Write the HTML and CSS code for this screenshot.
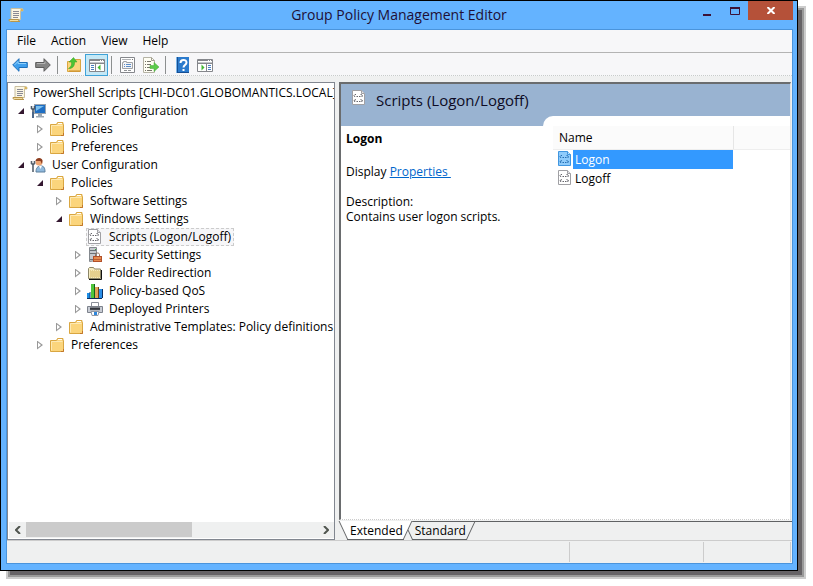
FILE: index.html
```html
<!DOCTYPE html>
<html lang="en">
<head>
	<meta charset="UTF-8">
	<meta name="viewport" content="width=device-width, initial-scale=1.0">
	<title>Group Policy Management Editor</title>
	<link rel="stylesheet" href="styles.css">
</head>
<body>
	<!-- icon sprite -->
	<svg class="sprite" aria-hidden="true">
		<symbol id="scroll" viewBox="0 0 16 16">
			<path d="M3 1.500h10.500c1 0 1.500.6 1.500 1.500v1h-2.500v8.500H3z" fill="#fbf6e2" stroke="#c9bfa0"/>
			<path d="M12.500 4V2.500c0-1 2.500-1 2.500.5v1z" fill="#d9b45a"/>
			<path d="M1 12.500h9.500c0 1.500.5 2 1.500 2H2.500C1.500 14.500 1 13.800 1 12.500z" fill="#f3dda0" stroke="#b8964a"/>
			<path d="M5 4.500h6M5 6.500h6M5 8.500h6M5 10.500h5" stroke="#8a8a94"/>
		</symbol>
		<symbol id="folder" viewBox="0 0 16 16">
			<path d="M1.500 3.500h6l1-2h5.500v2h.5v11h-13z" fill="#fbd57c" stroke="#d9a641"/>
			<path d="M9 2.500h4" stroke="#fff"/>
			<path d="M2.500 13.500v-9h11" stroke="#fde9b4" fill="none"/>
			<path d="M12 14.500h2.500V12" stroke="#c2762a" fill="none"/>
		</symbol>
		<symbol id="computer" viewBox="0 0 16 16">
			<rect x="4.500" y="1.500" width="11" height="9" fill="#1f6fc4" stroke="#9aa4ae"/>
			<path d="M6 3h8L6 8z" fill="#7cc0ee"/>
			<path d="M8 11h4v2h2v1.500H6V13h2z" fill="#9aa7b3"/>
			<path d="M1.500 3v2.500l1.500 1 1.500-1V3M3 6v8.500" stroke="#4d5966" stroke-width="1.600" fill="none"/>
			<path d="M3 9v6" stroke="#4d6788" stroke-width="2"/>
		</symbol>
		<symbol id="user" viewBox="0 0 16 16">
			<path d="M6 15c0-4 1.500-6 5-6s4 3 4 6z" fill="#8fb9dd" stroke="#5d7f9c"/>
			<path d="M9 9h3l-1.500 3z" fill="#fff"/>
			<circle cx="9" cy="5" r="3.500" fill="#efa572"/>
			<path d="M5.500 4C6 0 12 0 12.500 3.500L12 7l-1.500-3z" fill="#8b3d20"/>
			<path d="M1.500 4v2.500l1.500 1 1.500-1V4M3 7v8" stroke="#56616d" stroke-width="1.600" fill="none"/>
		</symbol>
		<symbol id="script" viewBox="0 0 16 16">
			<path d="M1.500.5h9l3 3v11h-12z" fill="#fff" stroke="#a0a0a4"/>
			<path d="M10.500.5v3h3" fill="#e4e4e8" stroke="#a0a0a4"/>
			<path d="M5 4.500H4L3 5.500 4 7M9.500 4.500h1l1 1.500-1 1M5.500 6.500h1.500M8 6.500h1.500M5 9.500l-2 1 1 1.500M9.500 9.500l2 1-1 1.500M5.500 11.500h1.500M8 11.500h1.500" fill="none" stroke="#66666c"/>
		</symbol>
		<symbol id="script-on" viewBox="0 0 16 16">
			<path d="M1.500.5h9l3 3v11h-12z" fill="#8ecbfb" stroke="#4096e0"/>
			<path d="M10.500.5v3h3" fill="#c4e4fd" stroke="#4096e0"/>
			<path d="M5 4.500H4L3 5.500 4 7M9.500 4.500h1l1 1.500-1 1M5.500 6.500h1.500M8 6.500h1.500M5 9.500l-2 1 1 1.500M9.500 9.500l2 1-1 1.500M5.500 11.500h1.500M8 11.500h1.500" fill="none" stroke="#256eb2"/>
		</symbol>
		<symbol id="security" viewBox="0 0 16 16">
			<path d="M2.500.5h7v13l-7 1z" fill="#c5c9ce" stroke="#84898e"/>
			<path d="M3 3.500h6M3 6.500h6M3 12.500h4" stroke="#6c7277"/>
			<path d="M8 2h1v1H8z" fill="#2fae3a"/>
			<path d="M8.500 10V7.500c0-2 4-2 4 0V10" fill="none" stroke="#8a6a58"/>
			<rect x="6.500" y="9.500" width="8" height="5" fill="#e58a4e" stroke="#b2502a"/>
			<path d="M7 12.500h7" stroke="#bd5c30"/>
		</symbol>
		<symbol id="redirect" viewBox="0 0 16 16">
			<path d="M1.500 13.500v-10l1-1h4l1 1.500h6v9.500z" fill="#f5ebc0" stroke="#8c8668"/>
			<path d="M3 6h9M3 8h9M3 10h9M3 12h9" stroke="#d4b45c" stroke-dasharray="1 1"/>
			<path d="M3 7h10M3 9h10M3 11h10" stroke="#d4b45c" stroke-dasharray="1 1" stroke-dashoffset="1"/>
			<path d="M2 14.500h12.500V5" fill="none" stroke="#111"/>
		</symbol>
		<symbol id="qos" viewBox="0 0 16 16">
			<path d="M0 10h3v5H0z" fill="#1c8ee6"/><path d="M3 9v6" stroke="#0a3b78"/>
			<path d="M4 1h3v14H4z" fill="#4fc63c"/><path d="M7.500 1v14" stroke="#14601a"/>
			<path d="M8 4h3v11H8z" fill="#dfa35a"/><path d="M11.500 4v11" stroke="#6e4218"/>
			<path d="M12 6h3v9h-3z" fill="#2a8ee8"/><path d="M15.500 6v9M0 15.500h15" stroke="#0a2e60"/>
		</symbol>
		<symbol id="printer" viewBox="0 0 16 16">
			<path d="M4.500 1.500h7v4h-7z" fill="#fff" stroke="#8b8f98"/>
			<path d="M.5 5.500h15v6H.5z" fill="#c8ccd4" stroke="#7d828c"/>
			<path d="M3 6.500h10v3l-1-1-1 1-1-1-1 1-1-1-1 1-1-1-1 1-1-1-1 1z" fill="#33363d"/>
			<path d="M4 10.500h8l-1 4H5z" fill="#fff" stroke="#9298a4"/>
			<path d="M7 11h3v3H7z" fill="#2d86dc"/>
		</symbol>
		<symbol id="back" viewBox="0 0 16 16">
			<path d="M.7 8L7 1.700v3.800h8.300v5H7v3.800z" fill="#3f9fee" stroke="#1f6fb8"/>
			<path d="M2.500 8L6 4.500v2h8" fill="none" stroke="#8fd0fb"/>
		</symbol>
		<symbol id="forward" viewBox="0 0 16 16">
			<path d="M15.300 8L9 1.700v3.800H.7v5H9v3.800z" fill="#858585" stroke="#5c5c5c"/>
			<path d="M2 6.500h8v-2" fill="none" stroke="#b4b4b4"/>
		</symbol>
		<symbol id="up" viewBox="0 0 16 16">
			<path d="M1.500 4.500h7l1-2h5v12h-13z" fill="#fbd57c" stroke="#d9a641"/>
			<path d="M3 14h11" stroke="#c98b2c"/>
			<path d="M2.500 11.500C5 10 6 8 5.500 5H3L7.500.5 11 5H8.500c.5 4-2.500 7-6 6.500z" fill="#4cc434" stroke="#35a022" stroke-width=".5"/>
		</symbol>
		<symbol id="tree-pane" viewBox="0 0 16 16">
			<path d="M.5 2.500h15v12H.5z" fill="#fff" stroke="#85878c"/>
			<path d="M0 3h16v1H0z" fill="#85878c"/><path d="M1 5.500h14" stroke="#c4c6ca"/>
			<path d="M0 6.500h16M6.500 7v7" stroke="#85878c"/>
			<path d="M11 3h1v1h-1zM13 3h1v1h-1z" fill="#fff"/>
			<path d="M2 8.500h3M2 10.500h3M2 12.500h3" stroke="#4b7fc0"/>
			<path d="M11.500 7.500v6L8.500 10.500z" fill="#45bb35"/>
		</symbol>
		<symbol id="action-pane" viewBox="0 0 16 16">
			<path d="M.5 2.500h15v12H.5z" fill="#fff" stroke="#85878c"/>
			<path d="M0 3h16v1H0z" fill="#85878c"/><path d="M1 5.500h14" stroke="#c4c6ca"/>
			<path d="M0 6.500h16M9.500 7v7" stroke="#85878c"/>
			<path d="M11 3h1v1h-1zM13 3h1v1h-1z" fill="#fff"/>
			<path d="M11 8.500h3M11 10.500h3M11 12.500h3" stroke="#4b7fc0"/>
			<path d="M4.500 7.500v6l3-3z" fill="#45bb35"/>
		</symbol>
		<symbol id="properties" viewBox="0 0 16 16">
			<path d="M.5.500h14v15H.5z" fill="#fff" stroke="#85878c"/>
			<path d="M2 2.500h9" stroke="#b0b2b6"/><path d="M12 2h1v1h-1z" fill="#777"/>
			<path d="M2.500 5.500h1v-1h3v1h6v6h-10z" fill="#f4f4f6" stroke="#a0a2a6"/>
			<path d="M4 7.500h1M6 7.500h5M4 9.500h1M6 9.500h5" stroke="#5b8dc8"/>
			<path d="M4 13.500h3M8 13.500h3" stroke="#909296"/>
		</symbol>
		<symbol id="export" viewBox="0 0 16 16">
			<path d="M.5.5h8l3 3v12H.5z" fill="#fffef4" stroke="#b5b3a5"/>
			<path d="M8.500.5v3h3" fill="none" stroke="#a09e90"/>
			<path d="M2 4.500h1M4 4.500h4M2 7.500h1M4 7.500h4M2 10.500h1M4 10.500h3M2 13.500h1M4 13.500h5" stroke="#77756c"/>
			<path d="M7 8.500h4v-3l5 4.500-5 4.500v-3H7z" fill="#5ccb4b" stroke="#41a834" stroke-width=".5"/>
		</symbol>
		<symbol id="help" viewBox="0 0 16 16">
			<path d="M2 0h13v16H2z" fill="#174f94"/><path d="M4 0h11v15H4z" fill="#2b7bcd"/>
			<path d="M2.500 0v16" stroke="#79b4e8"/>
			<path d="M6.500 6c0-4 6-4 6-.5C12.500 8 9.500 8 9.500 10.500M9.500 12v2" fill="none" stroke="#fff" stroke-width="2"/>
		</symbol>
	</svg>

	<div class="window">
		<header class="titlebar">
			<svg class="icon"><use href="#scroll"/></svg>
			<h1>Group Policy Management Editor</h1>
			<div class="controls">
				<button class="min" aria-label="Minimize"><svg width="9" height="10"><path d="M0 8h8v2H0z" fill="#3b1238"/></svg></button>
				<button class="max" aria-label="Maximize"><svg width="10" height="8"><path d="M.5 1h9v6.500h-9z" fill="none" stroke="#3b1238"/><path d="M0 1h10" stroke="#3b1238" stroke-width="2"/></svg></button>
				<button class="close" aria-label="Close"><svg width="8" height="7"><path d="M.5 0l7 7M7.500 0l-7 7" stroke="#fff" stroke-width="2"/></svg></button>
			</div>
		</header>

		<div class="client">
			<nav class="menubar">
				<button>File</button>
				<button>Action</button>
				<button>View</button>
				<button>Help</button>
			</nav>

			<div class="toolbar">
				<button aria-label="Back"><svg class="icon"><use href="#back"/></svg></button>
				<button aria-label="Forward"><svg class="icon"><use href="#forward"/></svg></button>
				<i class="sep"></i>
				<button aria-label="Up one level"><svg class="icon"><use href="#up"/></svg></button>
				<button class="on" aria-label="Show/Hide Console Tree"><svg class="icon"><use href="#tree-pane"/></svg></button>
				<i class="sep"></i>
				<button aria-label="Properties"><svg class="icon"><use href="#properties"/></svg></button>
				<button aria-label="Export List"><svg class="icon"><use href="#export"/></svg></button>
				<i class="sep"></i>
				<button aria-label="Help"><svg class="icon"><use href="#help"/></svg></button>
				<button aria-label="Show/Hide Action Pane"><svg class="icon"><use href="#action-pane"/></svg></button>
			</div>

			<main class="panes">
				<section class="tree-pane">
					<ul class="tree">
						<li>
							<div class="row root"><svg class="icon"><use href="#scroll"/></svg><span>PowerShell Scripts [CHI-DC01.GLOBOMANTICS.LOCAL] P</span></div>
							<ul>
								<li>
									<div class="row"><button class="twisty open" aria-label="Collapse"></button><svg class="icon"><use href="#computer"/></svg><span>Computer Configuration</span></div>
									<ul>
										<li><div class="row"><button class="twisty" aria-label="Expand"></button><svg class="icon"><use href="#folder"/></svg><span>Policies</span></div></li>
										<li><div class="row"><button class="twisty" aria-label="Expand"></button><svg class="icon"><use href="#folder"/></svg><span>Preferences</span></div></li>
									</ul>
								</li>
								<li>
									<div class="row"><button class="twisty open" aria-label="Collapse"></button><svg class="icon"><use href="#user"/></svg><span>User Configuration</span></div>
									<ul>
										<li>
											<div class="row"><button class="twisty open" aria-label="Collapse"></button><svg class="icon"><use href="#folder"/></svg><span>Policies</span></div>
											<ul>
												<li><div class="row"><button class="twisty" aria-label="Expand"></button><svg class="icon"><use href="#folder"/></svg><span>Software Settings</span></div></li>
												<li>
													<div class="row"><button class="twisty open" aria-label="Collapse"></button><svg class="icon"><use href="#folder"/></svg><span>Windows Settings</span></div>
													<ul>
														<li><div class="row selected"><svg class="icon"><use href="#script"/></svg><span>Scripts (Logon/Logoff)</span></div></li>
														<li><div class="row"><button class="twisty" aria-label="Expand"></button><svg class="icon"><use href="#security"/></svg><span>Security Settings</span></div></li>
														<li><div class="row"><button class="twisty" aria-label="Expand"></button><svg class="icon"><use href="#redirect"/></svg><span>Folder Redirection</span></div></li>
														<li><div class="row"><button class="twisty" aria-label="Expand"></button><svg class="icon"><use href="#qos"/></svg><span>Policy-based QoS</span></div></li>
														<li><div class="row"><button class="twisty" aria-label="Expand"></button><svg class="icon"><use href="#printer"/></svg><span>Deployed Printers</span></div></li>
													</ul>
												</li>
												<li><div class="row"><button class="twisty" aria-label="Expand"></button><svg class="icon"><use href="#folder"/></svg><span>Administrative Templates: Policy definitions (A</span></div></li>
											</ul>
										</li>
										<li><div class="row"><button class="twisty" aria-label="Expand"></button><svg class="icon"><use href="#folder"/></svg><span>Preferences</span></div></li>
									</ul>
								</li>
							</ul>
						</li>
					</ul>
					<div class="scrollbar">
						<button aria-label="Scroll left"><svg width="6" height="8"><path d="M5 0L1 4l4 4" fill="none" stroke="#50554f" stroke-width="2"/></svg></button>
						<div class="track"><div class="thumb"></div></div>
						<button aria-label="Scroll right"><svg width="6" height="8"><path d="M1 0l4 4-4 4" fill="none" stroke="#50554f" stroke-width="2"/></svg></button>
					</div>
				</section>

				<section class="result-pane">
					<div class="result-body">
						<div class="banner">
							<svg class="icon"><use href="#script"/></svg>
							<h2>Scripts (Logon/Logoff)</h2>
						</div>
						<div class="columns">
							<div class="info">
								<h3>Logon</h3>
								<p>Display <a href="#">Properties </a></p>
								<p>Description:<br>Contains user logon scripts.</p>
							</div>
							<div class="list">
								<table>
									<thead><tr><th>Name</th><th class="rest"></th></tr></thead>
									<tbody>
										<tr class="selected"><td><div class="item"><svg class="icon"><use href="#script-on"/></svg><span>Logon</span></div></td><td></td></tr>
										<tr><td><div class="item"><svg class="icon"><use href="#script"/></svg><span>Logoff</span></div></td><td></td></tr>
									</tbody>
								</table>
							</div>
						</div>
					</div>
					<div class="tabs">
						<button class="active"><span>Extended</span></button>
						<button><span>Standard</span></button>
					</div>
				</section>
			</main>

			<footer class="statusbar">
				<span class="message"></span>
				<span class="cell"></span>
				<span class="cell small"></span>
			</footer>
		</div>
	</div>
</body>
</html>
```
FILE: styles.css
```css
* {
	box-sizing: border-box;
	margin: 0;
	padding: 0;
}
body {
	height: 100vh;
	padding: 0 15px 15px 0;
	background: #fff;
	color: #000;
	font: 12px/18px "Open Sans", "Noto Sans", sans-serif;
	overflow: hidden;
}
button {
	border: 0;
	background: none;
	color: inherit;
	font: inherit;
}
ul {
	list-style: none;
}
.sprite {
	display: none;
}
.icon {
	flex: none;
	display: block;
	width: 16px;
	height: 16px;
}

/* window frame */
.window {
	display: flex;
	flex-direction: column;
	height: 100%;
	padding: 0 4px 6px 5px;
	border: 1px solid #000;
	background: #64b3ff;
	box-shadow: 7px 7px 0 -3px #666366, 7px 7px 0 -1px #999, 7px 7px 0 1px #ccc;
}
.titlebar {
	flex: none;
	display: flex;
	align-items: center;
	height: 28px;
	padding-left: 2px;
}
.titlebar h1 {
	flex: 1;
	padding-left: 80px;
	color: #200f36;
	font-size: 14px;
	font-weight: normal;
	text-align: center;
}
.controls {
	display: flex;
	align-self: flex-start;
}
.controls button {
	display: flex;
	align-items: center;
	justify-content: center;
	width: 27px;
	height: 19px;
}
.controls .close {
	width: 45px;
	background: #b55139;
}
.client {
	flex: 1;
	display: flex;
	flex-direction: column;
	min-height: 0;
	border: 1px solid #4a94dc;
	background: #eff0f0;
}

/* menu and toolbar */
.menubar {
	flex: none;
	display: flex;
	gap: 15px;
	height: 23px;
	padding-left: 10px;
	border-bottom: 1px solid #b4b4b4;
	background: #f7f7f9;
}
.toolbar {
	flex: none;
	display: flex;
	align-items: center;
	height: 23px;
	padding: 2px 0 0 1px;
	margin-bottom: 6px;
	border-bottom: 1px dotted #c8cccb;
	background: #f7f7f9;
}
.toolbar button {
	display: flex;
	align-items: center;
	justify-content: center;
	width: 23px;
	height: 22px;
}
.toolbar .on {
	border: 1px solid #3ea2d8;
	background: #c5e8f6;
}
.sep {
	width: 1px;
	height: 18px;
	margin: 0 4px 0 3px;
	background: #8c8f90;
}

/* panes */
.panes {
	flex: 1;
	display: grid;
	grid-template-columns: 42fr 58fr;
	gap: 4px;
	min-height: 0;
}
.tree-pane {
	display: flex;
	flex-direction: column;
	min-width: 0;
	border: 1px solid #828790;
	background: #fff;
}
.tree {
	flex: 1;
	padding: 1px 0 0 4px;
	overflow: hidden;
}
.tree ul ul {
	padding-left: 19px;
}
.row {
	display: flex;
	align-items: center;
	height: 18px;
	white-space: nowrap;
}
.row span {
	padding-left: 6px;
}
.row.root span {
	padding-left: 5px;
}
.row.selected {
	width: max-content;
	margin-left: 17px;
	padding-right: 2px;
	border: 1px dashed #ccc;
	background: #f6f6f8;
}
.twisty {
	flex: none;
	display: flex;
	align-items: center;
	width: 18px;
	height: 18px;
	padding-left: 6px;
}
.twisty::before {
	content: "";
	width: 6px;
	height: 9px;
	background: #999;
	clip-path: polygon(0 0, 100% 50%, 0 100%, 0 0, 1px 2px, 1px 7px, 4px 50%, 1px 2px);
}
.twisty.open::before {
	height: 6px;
	background: #33172f;
	clip-path: polygon(100% 0, 100% 100%, 0 100%);
}
.scrollbar {
	flex: none;
	display: flex;
	height: 16px;
	margin: 0 0 1px 1px;
	background: #eff0f0;
}
.scrollbar button {
	display: flex;
	align-items: center;
	justify-content: center;
	width: 17px;
}
.track {
	flex: 1;
}
.thumb {
	width: 57%;
	height: 15px;
	background: #cbcbcb;
}

.result-pane {
	display: flex;
	flex-direction: column;
	min-width: 0;
}
.result-body {
	flex: 1;
	min-height: 0;
	margin-right: 1px;
	border: solid #6a6c6e;
	border-width: 2px 1px 1px 2px;
	border-right-color: #e3e3e3;
	border-bottom: 1px dotted #ccc;
	background: #fff;
}
.banner {
	display: flex;
	gap: 9px;
	height: 42px;
	padding: 6px 0 0 10px;
	background: #99b3d1;
}
.banner h2 {
	color: #0d0b24;
	font-size: 15px;
	font-weight: normal;
	line-height: 20px;
}
.columns {
	display: grid;
	grid-template-columns: 45fr 55fr;
}
.info {
	padding: 4px 0 0 5px;
	line-height: 15px;
}
.info h3 {
	margin-bottom: 16px;
	font-size: 12px;
	font-weight: bold;
	line-height: 18px;
}
.info p {
	margin-bottom: 15px;
}
.info a {
	color: #0066cc;
	white-space: pre;
}
.list {
	margin-top: -10px;
	padding: 10px 0 0 10px;
	border-top-left-radius: 10px;
	background: #fff;
}
.list table {
	width: 100%;
	border-collapse: collapse;
	table-layout: fixed;
}
.list th {
	width: 76%;
	height: 23px;
	padding: 2px 0 0 6px;
	border-right: 1px solid #e6e6e6;
	border-bottom: 1px solid #eee;
	background: #fbfbfb;
	font-weight: normal;
	text-align: left;
}
.list .rest {
	width: auto;
	border-right: 0;
}
.item {
	display: flex;
	align-items: center;
	height: 19px;
	padding-left: 4px;
}
.item span {
	flex: 1;
	padding-left: 2px;
	line-height: 19px;
}
.selected .item span {
	background: #3399ff;
	color: #fff;
}

/* view tabs, each side is a skewed half */
.tabs {
	flex: none;
	display: flex;
	height: 19px;
	margin-top: 1px;
	border-top: 1px solid #606264;
}
.tabs button {
	position: relative;
	z-index: 0;
	height: 18px;
	padding: 0 6px 0 7px;
}
.tabs button::before,
.tabs button::after {
	content: "";
	position: absolute;
	z-index: -1;
	top: 0;
	bottom: 0;
	border-bottom: 1px solid #606264;
}
.tabs button::before {
	left: 0;
	right: 40%;
	border-left: 1px solid #606264;
	transform: skewX(25deg);
}
.tabs button::after {
	left: 40%;
	right: 0;
	border-right: 1px solid #606264;
	transform: skewX(-25deg);
}
.tabs .active {
	z-index: 1;
	padding: 0 5px 0 7px;
	margin-left: 4px;
}
.tabs .active::before,
.tabs .active::after {
	top: -1px;
	background: #fff;
}

.statusbar {
	flex: none;
	display: flex;
	height: 23px;
	padding: 1px 1px 1px 0;
	border-top: 1px solid #ccc;
}
.statusbar span {
	border-right: 1px solid #ccc;
}
.message {
	flex: 72;
}
.cell {
	flex: 17;
}
.cell.small {
	flex: 11;
}
```
